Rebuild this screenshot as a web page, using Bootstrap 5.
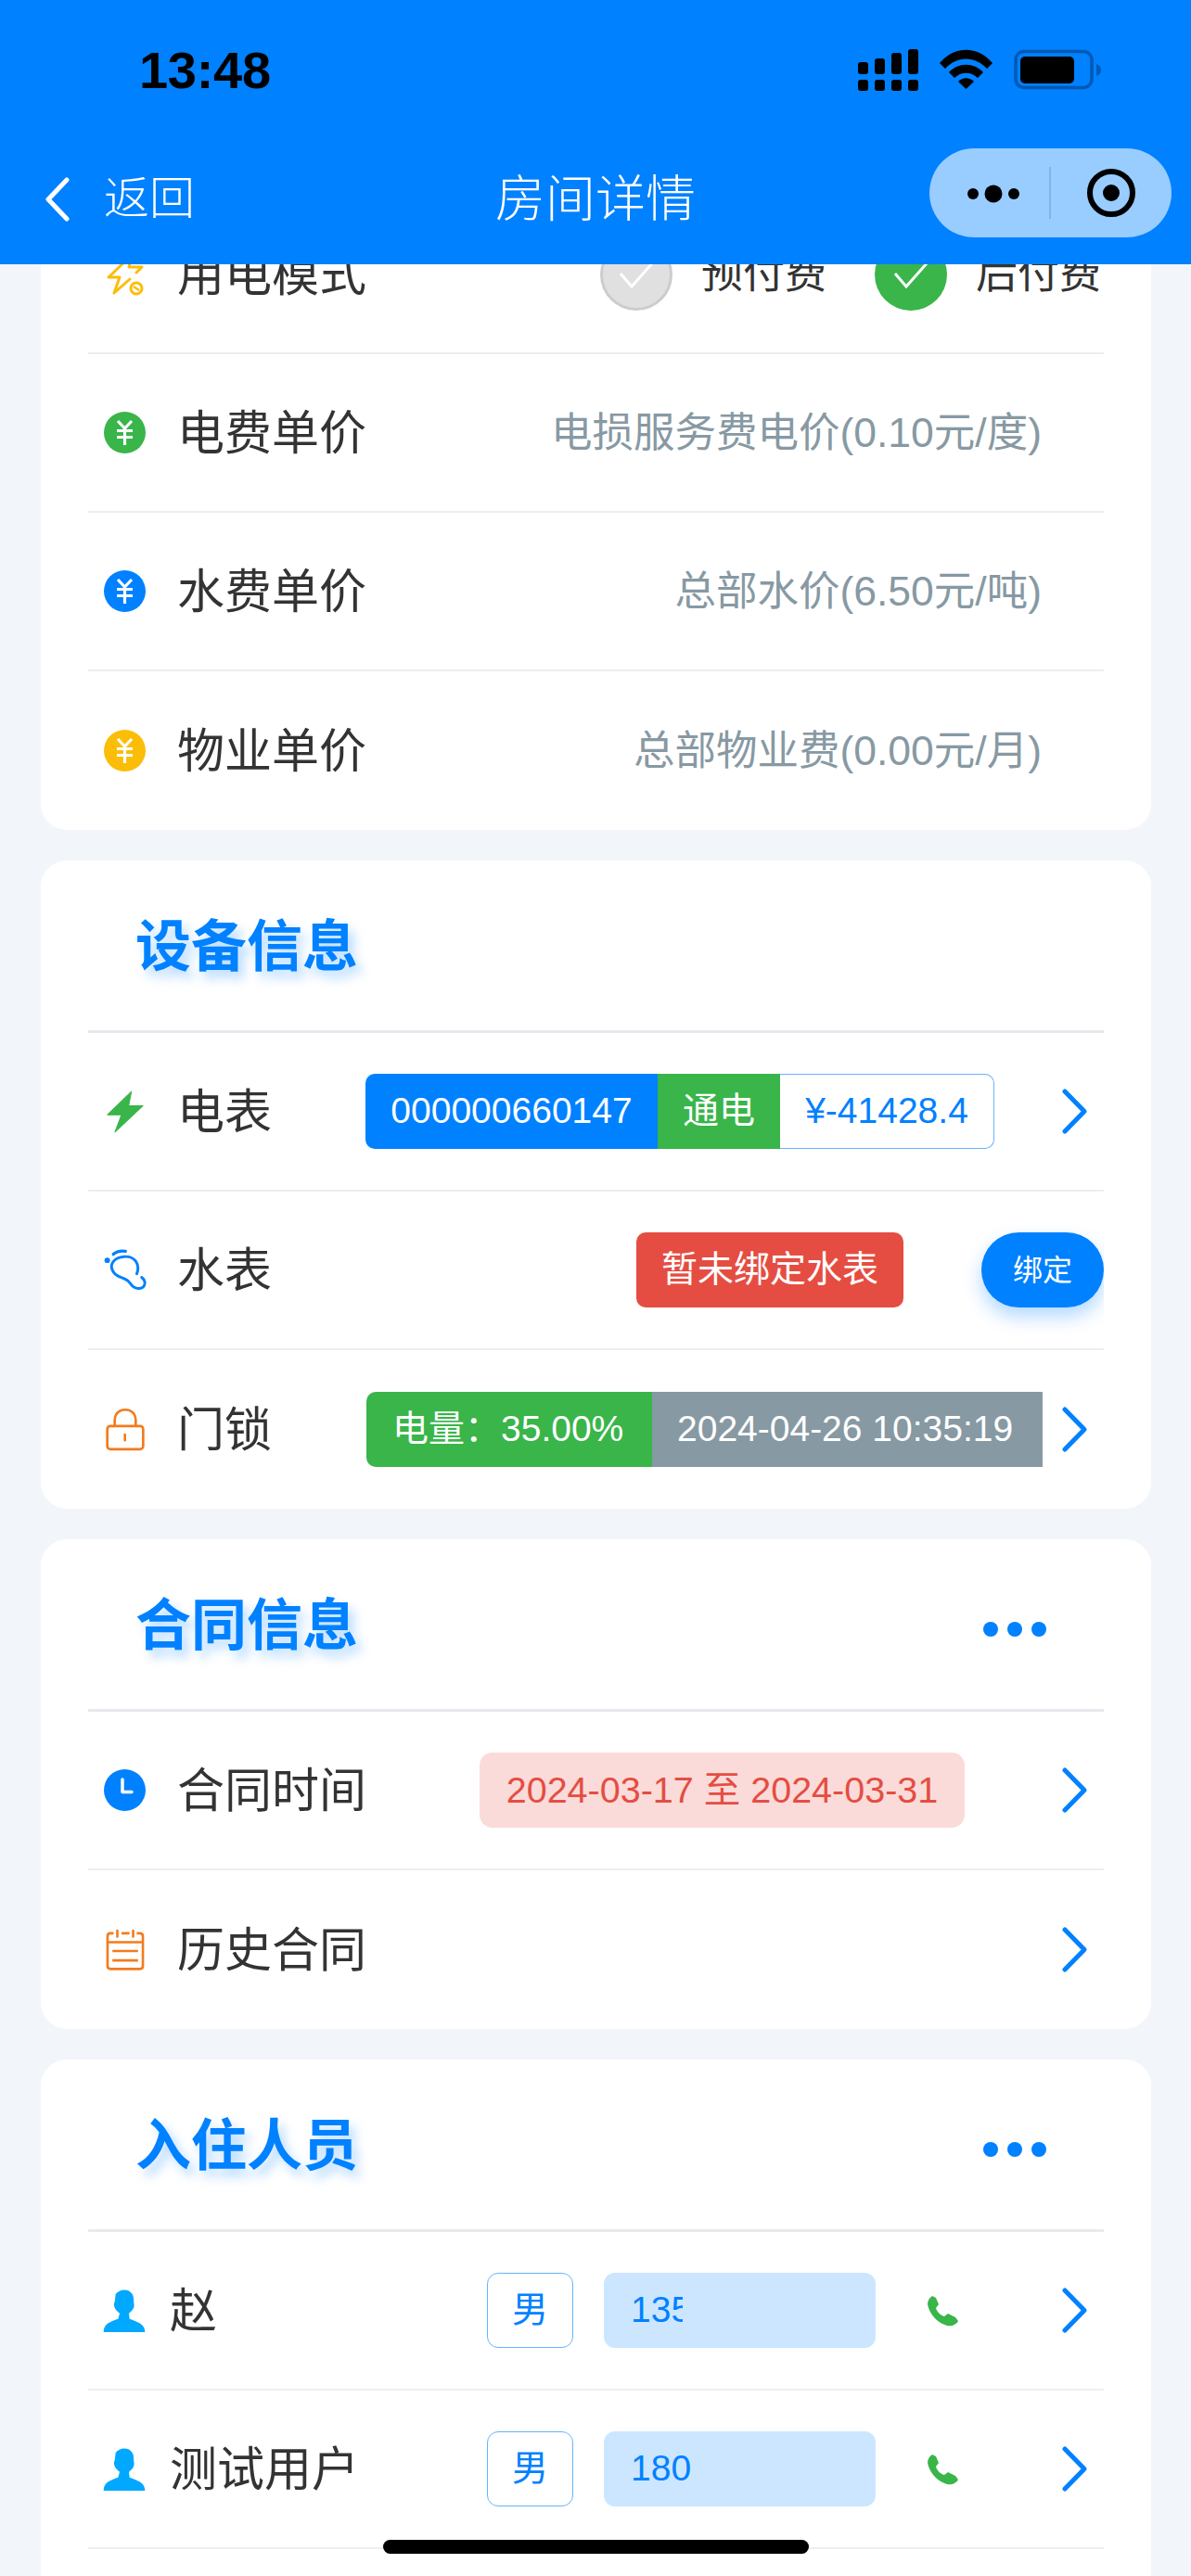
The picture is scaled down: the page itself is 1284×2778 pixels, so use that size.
<!DOCTYPE html>
<html lang="zh-CN">
  <head>
    <meta charset="UTF-8" />
    <meta name="viewport" content="width=device-width, initial-scale=1.0" />
    <title>房间详情</title>
    <link
      href="https://cdn.jsdelivr.net/npm/bootstrap@5.3.0/dist/css/bootstrap.min.css"
      rel="stylesheet"
    />
    <style>
      html, body { height: 100%; overflow: hidden; }
      body {
        background: #f2f6fb;
        color: #333;
        font-family: "Liberation Sans", "Noto Sans CJK SC", sans-serif;
      }
      /* header */
      .top-head { height: 285px; background: #0081ff; z-index: 10; }
      .status-line { height: 159px; padding: 53px 97px 0 150px; }
      .clock-text { font-size: 56px; font-weight: 700; line-height: 46px; color: #000; letter-spacing: -.3px; }
      .nav-line { display: grid; grid-template-columns: minmax(0, 1fr) auto minmax(0, 1fr); height: 96px; padding: 0 21px; color: #fff; }
      .back-wrap { padding-left: 28px; padding-top: 14px; }
      .back-text { font-size: 49px; font-weight: 300; margin-left: 37px; }
      .head-title { font-size: 54px; font-weight: 300; padding-top: 16px; }
      .capsule-box { width: 261px; height: 96px; border-radius: 48px; background: #99ccff; }
      /* page */
      .page-body { padding: 211px 43px 0 44px; gap: 33px; }
      .info-card { border: 0; border-radius: 28px; padding: 0 51px; }
      .last-card { padding-bottom: 80px; }
      .card-head { height: 186px; border-bottom: 3px solid #e8e8ee; }
      .head-text {
        font-size: 60px; font-weight: 700; color: #0081ff; margin-left: 51px; padding-top: 4px;
        text-shadow: 6px 8px 12px rgba(0, 129, 255, .3);
      }
      .more-dots { margin-right: 62px; margin-top: 10px; gap: 10px; }
      .more-dots i { width: 16px; height: 16px; border-radius: 50%; background: #0081ff; }
      .info-row { height: 171px; border-bottom: 2px solid #eee; overflow: hidden; }
      .info-row:last-child { border-bottom: 0; }
      .last-card .info-row:last-child { border-bottom: 2px solid #eee; }
      .ico-slot { width: 79px; margin-right: 17px; flex: none; }
      .ico-slot.user-slot { width: 78px; margin-right: 10px; }
      .row-label { font-size: 51px; flex: none; padding-top: 4px; }
      .row-value { font-size: 44.5px; color: #8799a3; margin-right: 67px; padding-top: 2px; }
      .arrow-slot { margin-right: 17px; flex: none; }
      .arrow-end { margin-left: auto; }
      .tag-chip {
        height: 81px; padding: 0 28px; font-size: 39px; white-space: nowrap;
        display: inline-flex; align-items: center; color: #fff;
      }
      .chip-blue { background: #0081ff; border-radius: 10px 0 0 10px; width: 315px; padding: 0; justify-content: center; }
      .chip-green { background: #39b54a; }
      .chip-mid { width: 132px; padding: 0; justify-content: center; }
      .chip-left { border-radius: 10px 0 0 10px; width: 308px; padding: 0 0 0 28px; }
      .chip-money { background: #fff; color: #0081ff; border: 1px solid #66b3ff; border-left: 0; border-radius: 0 10px 10px 0; width: 231px; padding: 0; justify-content: center; }
      .chip-grey { background: #8799a3; width: 421px; padding: 0 0 0 27px; }
      .chip-red { background: #e54d42; border-radius: 10px; width: 288px; padding: 0; justify-content: center; }
      .chip-pink { background: #fadbd9; color: #e54d42; border-radius: 14px; width: 523px; padding: 0; justify-content: center; font-size: 39.5px; }
      .chip-sex { background: #fff; color: #0081ff; border: 1px solid #66b3ff; border-radius: 12px; width: 93px; padding: 0; justify-content: center; }
      .chip-phone { background: #cce6ff; color: #0081ff; border-radius: 12px; width: 293px; padding: 0 0 0 29px; margin-left: 33px; }
      .phone-cut { display: block; width: 56px; overflow: hidden; }
      .gap-tail { margin-right: 72px; }
      .tight-tail { margin-right: 20px; }
      .pink-tail { margin-right: 104px; }
      .bind-btn {
        width: 132px; height: 81px; margin-left: 84px; padding: 0;
        border: 0; border-radius: 41px; font-size: 32px; color: #fff; background: #0081ff;
        box-shadow: 0 10px 20px rgba(0, 129, 255, .3);
      }
      .pick-ball { width: 78px; height: 78px; border-radius: 50%; flex: none; }
      .ball-off { background: #e0e0e0; border: 3px solid #ccc; }
      .ball-on { background: #39b54a; }
      .pick-text { font-size: 45px; margin: 0 3px 0 31px; }
      .pick-first { margin-right: 52px; }
      .phone-slot { margin-left: 55px; margin-right: 110px; flex: none; }
      .home-bar { width: 459px; height: 15px; border-radius: 8px; background: #000; }
      .home-wrap { padding-bottom: 24px; pointer-events: none; z-index: 11; }
    </style>
  </head>
  <body>
    <!-- 顶部 -->
    <div class="top-head fixed-top">
      <div class="status-line d-flex justify-content-between">
        <span class="clock-text">13:48</span>
        <svg width="262" height="46" viewBox="925 53 262 46">
          <g fill="#000">
            <rect x="925" y="67" width="11" height="13" rx="3" /><rect x="943" y="63" width="11" height="17" rx="3" />
            <rect x="961" y="57" width="11" height="23" rx="3" /><rect x="979" y="53" width="11" height="27" rx="3" />
            <rect x="925" y="86" width="11" height="12" rx="3" /><rect x="943" y="86" width="11" height="12" rx="3" />
            <rect x="961" y="86" width="11" height="12" rx="3" /><rect x="979" y="86" width="11" height="12" rx="3" />
            <path d="M1013 68 C1029 49 1054 49 1070 68 L1064 74 C1051 60 1032 60 1019 74 Z" />
            <path d="M1023 78 C1033 67 1050 67 1060 78 L1054 84 C1047 77 1036 77 1029 84 Z" />
            <path d="M1033 88 C1038 83 1045 83 1050 88 L1041.500 96 Z" />
            <rect x="1100" y="61" width="58" height="29" rx="5" />
          </g>
          <rect x="1095" y="55.500" width="82" height="39" rx="9" fill="none" stroke="#0059b3" stroke-width="3.500" />
          <path d="M1182 69 C1186 71 1187 73 1187 75.500 C1187 78 1186 80 1182 82 Z" fill="#0059b3" />
        </svg>
      </div>
      <div class="nav-line align-items-center">
        <div class="back-wrap d-flex align-items-center">
          <svg width="26" height="48" viewBox="0 0 26 48"><path d="M23 3 L3 24 L23 45" fill="none" stroke="#fff" stroke-width="5" stroke-linecap="round" stroke-linejoin="round" /></svg>
          <span class="back-text">返回</span>
        </div>
        <div class="head-title">房间详情</div>
        <div class="d-flex justify-content-end">
          <div class="capsule-box">
            <svg width="261" height="96" viewBox="1002 159 261 96">
              <g fill="#000">
                <circle cx="1049" cy="208" r="6" /><circle cx="1071" cy="208" r="9.500" /><circle cx="1093" cy="208" r="6" />
                <circle cx="1198" cy="207" r="9" />
              </g>
              <path d="M1132 179 V235" stroke="#000" stroke-opacity=".25" stroke-width="1" />
              <circle cx="1198" cy="207" r="23" fill="none" stroke="#000" stroke-width="6" />
            </svg>
          </div>
        </div>
      </div>
    </div>

    <main class="page-body d-flex flex-column">
      <!-- 费用 -->
      <div class="card info-card">
        <div class="info-row d-flex align-items-center">
          <div class="ico-slot d-flex justify-content-center">
            <svg width="40" height="46" viewBox="0 0 40 46">
              <path d="M27 2 L2 26 H14 L8 43 L25 28 M27 2 L24 15 H38 L32 21" fill="none" stroke="#fbbd08" stroke-width="3" stroke-linejoin="round" stroke-linecap="round" />
              <circle cx="32" cy="38" r="6" fill="none" stroke="#fbbd08" stroke-width="3" />
              <path d="M29 36 L35 40" stroke="#fbbd08" stroke-width="2.500" />
            </svg>
          </div>
          <span class="row-label">用电模式</span>
          <div class="ms-auto d-flex align-items-center">
            <div class="pick-ball ball-off d-flex align-items-center justify-content-center">
              <svg width="40" height="32" viewBox="0 0 40 32"><path d="M3 15 L15 29 L38 3" fill="none" stroke="#fff" stroke-width="3" /></svg>
            </div>
            <span class="pick-text pick-first">预付费</span>
            <div class="pick-ball ball-on d-flex align-items-center justify-content-center">
              <svg width="40" height="32" viewBox="0 0 40 32"><path d="M3 15 L15 29 L38 3" fill="none" stroke="#fff" stroke-width="3" /></svg>
            </div>
            <span class="pick-text">后付费</span>
          </div>
        </div>
        <div class="info-row d-flex align-items-center">
          <div class="ico-slot d-flex justify-content-center">
            <svg width="45" height="45" viewBox="0 0 45 45"><circle cx="22.500" cy="22.500" r="22.500" fill="#39b54a" /><path d="M15 10 L22.500 18 L30 10 M14 20.500 H31 M14 27.500 H31 M22.500 18 V36" fill="none" stroke="#fff" stroke-width="3.200" /></svg>
          </div>
          <span class="row-label">电费单价</span>
          <span class="row-value ms-auto">电损服务费电价(0.10元/度)</span>
        </div>
        <div class="info-row d-flex align-items-center">
          <div class="ico-slot d-flex justify-content-center">
            <svg width="45" height="45" viewBox="0 0 45 45"><circle cx="22.500" cy="22.500" r="22.500" fill="#0081ff" /><path d="M15 10 L22.500 18 L30 10 M14 20.500 H31 M14 27.500 H31 M22.500 18 V36" fill="none" stroke="#fff" stroke-width="3.200" /></svg>
          </div>
          <span class="row-label">水费单价</span>
          <span class="row-value ms-auto">总部水价(6.50元/吨)</span>
        </div>
        <div class="info-row d-flex align-items-center">
          <div class="ico-slot d-flex justify-content-center">
            <svg width="45" height="45" viewBox="0 0 45 45"><circle cx="22.500" cy="22.500" r="22.500" fill="#fbbd08" /><path d="M15 10 L22.500 18 L30 10 M14 20.500 H31 M14 27.500 H31 M22.500 18 V36" fill="none" stroke="#fff" stroke-width="3.200" /></svg>
          </div>
          <span class="row-label">物业单价</span>
          <span class="row-value ms-auto">总部物业费(0.00元/月)</span>
        </div>
      </div>

      <!-- 设备信息 -->
      <div class="card info-card">
        <div class="card-head d-flex align-items-center">
          <span class="head-text">设备信息</span>
        </div>
        <div class="info-row d-flex align-items-center">
          <div class="ico-slot d-flex justify-content-center">
            <svg width="40" height="46" viewBox="105 75 118 137"><path d="M184 78 L107 153 H152 L131 209 L221 124 H175 Z" fill="#39b54a" stroke="#39b54a" stroke-width="3" stroke-linejoin="round" /></svg>
          </div>
          <span class="row-label">电表</span>
          <div class="ms-auto d-flex gap-tail">
            <span class="tag-chip chip-blue">000000660147</span>
            <span class="tag-chip chip-green chip-mid">通电</span>
            <span class="tag-chip chip-money">¥-41428.4</span>
          </div>
          <svg class="arrow-slot" width="29" height="49" viewBox="0 0 29 49"><path d="M4 3 L25 24.500 L4 46" fill="none" stroke="#0081ff" stroke-width="5" stroke-linecap="round" stroke-linejoin="round" /></svg>
        </div>
        <div class="info-row d-flex align-items-center">
          <div class="ico-slot d-flex justify-content-center">
            <svg width="46" height="48" viewBox="94 588 140 144">
              <path d="M202 671 C214 640 195 612 160 615 C125 618 110 642 125 665 C140 688 165 680 180 702 C195 727 232 725 228 697 C226 690 222 686 218 683" fill="none" stroke="#0081ff" stroke-width="9" stroke-linecap="round" />
              <path d="M125 607 C135 598 150 595 165 597" fill="none" stroke="#0081ff" stroke-width="10" stroke-linecap="round" />
              <circle cx="105" cy="627" r="9" fill="#0081ff" />
            </svg>
          </div>
          <span class="row-label">水表</span>
          <span class="tag-chip chip-red ms-auto">暂未绑定水表</span>
          <button type="button" class="btn bind-btn">绑定</button>
        </div>
        <div class="info-row d-flex align-items-center">
          <div class="ico-slot d-flex justify-content-center">
            <svg width="44" height="47" viewBox="98 1100 132 140">
              <rect x="106" y="1159" width="116" height="75" rx="10" fill="none" stroke="#f37b1d" stroke-width="8" />
              <path d="M130 1159 V1140 C130 1095 198 1095 198 1140 V1159" fill="none" stroke="#f37b1d" stroke-width="8" />
              <path d="M163 1187 V1205" stroke="#f37b1d" stroke-width="8" stroke-linecap="round" />
            </svg>
          </div>
          <span class="row-label">门锁</span>
          <div class="ms-auto d-flex tight-tail">
            <span class="tag-chip chip-green chip-left">电量：35.00%</span>
            <span class="tag-chip chip-grey">2024-04-26 10:35:19</span>
          </div>
          <svg class="arrow-slot" width="29" height="49" viewBox="0 0 29 49"><path d="M4 3 L25 24.500 L4 46" fill="none" stroke="#0081ff" stroke-width="5" stroke-linecap="round" stroke-linejoin="round" /></svg>
        </div>
      </div>

      <!-- 合同信息 -->
      <div class="card info-card">
        <div class="card-head d-flex align-items-center justify-content-between">
          <span class="head-text">合同信息</span>
          <div class="more-dots d-flex"><i></i><i></i><i></i></div>
        </div>
        <div class="info-row d-flex align-items-center">
          <div class="ico-slot d-flex justify-content-center">
            <svg width="45" height="45" viewBox="0 0 45 45"><circle cx="22.500" cy="22.500" r="22.500" fill="#0081ff" /><path d="M20 11 V24.500 H30" fill="none" stroke="#fff" stroke-width="3.500" stroke-linecap="round" stroke-linejoin="round" /></svg>
          </div>
          <span class="row-label">合同时间</span>
          <span class="tag-chip chip-pink ms-auto pink-tail">2024-03-17 至 2024-03-31</span>
          <svg class="arrow-slot" width="29" height="49" viewBox="0 0 29 49"><path d="M4 3 L25 24.500 L4 46" fill="none" stroke="#0081ff" stroke-width="5" stroke-linecap="round" stroke-linejoin="round" /></svg>
        </div>
        <div class="info-row d-flex align-items-center">
          <div class="ico-slot d-flex justify-content-center">
            <svg width="44" height="46" viewBox="98 592 132 140">
              <path d="M126 607 H114 Q106 607 106 617 V714 Q106 724 116 724 H212 Q222 724 222 714 V617 Q222 607 212 607 H202 M152 607 H178 M106 636 H222 M122 665 H206 M122 696 H206" fill="none" stroke="#f37b1d" stroke-width="8" />
              <path d="M138 598 V618 M190 598 V618" stroke="#f37b1d" stroke-width="8" stroke-linecap="round" />
            </svg>
          </div>
          <span class="row-label">历史合同</span>
          <svg class="arrow-slot arrow-end" width="29" height="49" viewBox="0 0 29 49"><path d="M4 3 L25 24.500 L4 46" fill="none" stroke="#0081ff" stroke-width="5" stroke-linecap="round" stroke-linejoin="round" /></svg>
        </div>
      </div>

      <!-- 入住人员 -->
      <div class="card info-card last-card">
        <div class="card-head d-flex align-items-center justify-content-between">
          <span class="head-text">入住人员</span>
          <div class="more-dots d-flex"><i></i><i></i><i></i></div>
        </div>
        <div class="info-row d-flex align-items-center">
          <div class="ico-slot user-slot d-flex justify-content-center">
            <svg width="46" height="46" viewBox="88 120 134 138"><path d="M88 258 C88 230 110 224 135 215 L140 197 C130 190 120 178 122 165 C125 160 125 150 127 135 C135 125 150 120 155 122 C165 120 185 130 185 150 L186 165 C190 178 180 190 170 197 L172 215 C195 224 222 230 222 258 Z" fill="#00a8ff" /></svg>
          </div>
          <span class="row-label">赵</span>
          <span class="tag-chip chip-sex ms-auto">男</span>
          <span class="tag-chip chip-phone"><span class="phone-cut">135</span></span>
          <svg class="phone-slot" width="35" height="34" viewBox="0 0 35 34"><path d="M6 1 L10 3 L13 10 L10 14 C11 18 15 22 19 23 L23 20 L31 24 L34 28 C32 32 27 34 22 33 C11 30 3 20 1 10 C1 6 3 3 6 1 Z" fill="#39b54a" /></svg>
          <svg class="arrow-slot" width="29" height="49" viewBox="0 0 29 49"><path d="M4 3 L25 24.500 L4 46" fill="none" stroke="#0081ff" stroke-width="5" stroke-linecap="round" stroke-linejoin="round" /></svg>
        </div>
        <div class="info-row d-flex align-items-center">
          <div class="ico-slot user-slot d-flex justify-content-center">
            <svg width="46" height="46" viewBox="88 120 134 138"><path d="M88 258 C88 230 110 224 135 215 L140 197 C130 190 120 178 122 165 C125 160 125 150 127 135 C135 125 150 120 155 122 C165 120 185 130 185 150 L186 165 C190 178 180 190 170 197 L172 215 C195 224 222 230 222 258 Z" fill="#00a8ff" /></svg>
          </div>
          <span class="row-label">测试用户</span>
          <span class="tag-chip chip-sex ms-auto">男</span>
          <span class="tag-chip chip-phone">180</span>
          <svg class="phone-slot" width="35" height="34" viewBox="0 0 35 34"><path d="M6 1 L10 3 L13 10 L10 14 C11 18 15 22 19 23 L23 20 L31 24 L34 28 C32 32 27 34 22 33 C11 30 3 20 1 10 C1 6 3 3 6 1 Z" fill="#39b54a" /></svg>
          <svg class="arrow-slot" width="29" height="49" viewBox="0 0 29 49"><path d="M4 3 L25 24.500 L4 46" fill="none" stroke="#0081ff" stroke-width="5" stroke-linecap="round" stroke-linejoin="round" /></svg>
        </div>
      </div>
    </main>

    <div class="home-wrap fixed-bottom d-flex justify-content-center">
      <div class="home-bar"></div>
    </div>

    <script src="https://cdn.jsdelivr.net/npm/bootstrap@5.3.0/dist/js/bootstrap.bundle.min.js"></script>
  </body>
</html>
